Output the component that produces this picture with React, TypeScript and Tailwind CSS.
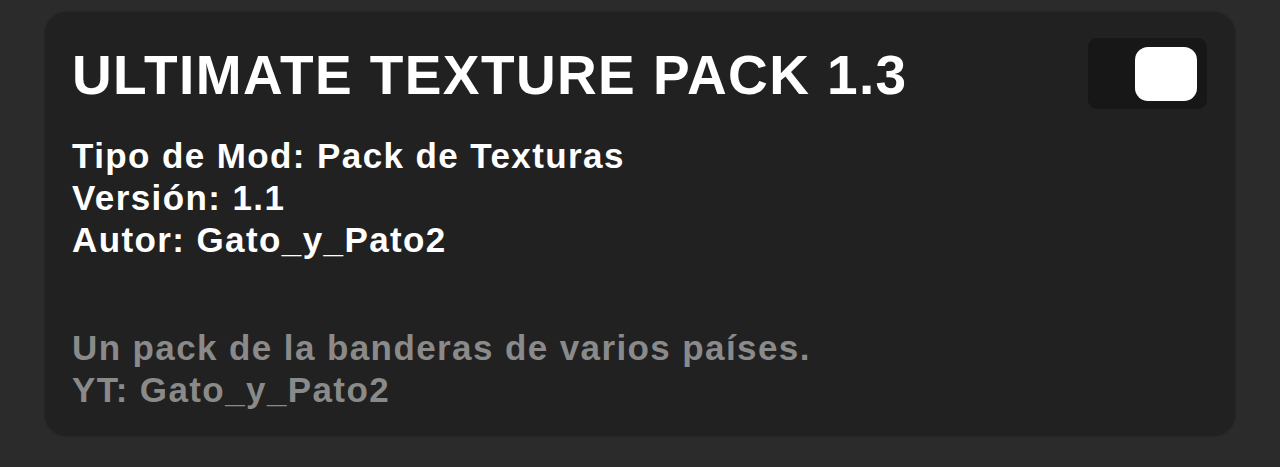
import React, { useState } from "react";

const font = { fontFamily: '"Liberation Sans", Arial, Helvetica, sans-serif' };

function Toggle() {
  const [on, setOn] = useState(true);
  return (
    <button
      type="button"
      onClick={() => setOn(!on)}
      className={`flex h-[71px] w-[119px] shrink-0 items-center rounded-[9px] bg-[#171717] px-[10px] ${
        on ? "justify-end" : "justify-start"
      }`}
    >
      <span className="block h-[54px] w-[62px] rounded-[13px] bg-white" />
    </button>
  );
}

export default function App() {
  return (
    <div className="h-[467px] w-full bg-[#2b2b2b] px-[45px] pt-[12px]" style={font}>
      <div className="rounded-[22px] bg-[#212121] pb-[25px] pl-[27px] pr-[28px] pt-[26px] shadow-[0_0_2px_rgba(0,0,0,0.35)]">
        <div className="flex items-start justify-between">
          <h1 className="mt-[5px] text-[55px] font-bold leading-[64px] tracking-[1.4px] text-white">
            ULTIMATE TEXTURE PACK 1.3
          </h1>
          <Toggle />
        </div>
        <div className="mt-[26px] text-[35px] font-bold leading-[42px] tracking-[1.4px] text-white">
          <p>Tipo de Mod: Pack de Texturas</p>
          <p>Versión: 1.1</p>
          <p>Autor: Gato_y_Pato2</p>
        </div>
        <div className="mt-[66px] text-[35px] font-bold leading-[42px] tracking-[1.4px] text-[#8a8a8a]">
          <p>Un pack de la banderas de varios países.</p>
          <p>YT: Gato_y_Pato2</p>
        </div>
      </div>
    </div>
  );
}
